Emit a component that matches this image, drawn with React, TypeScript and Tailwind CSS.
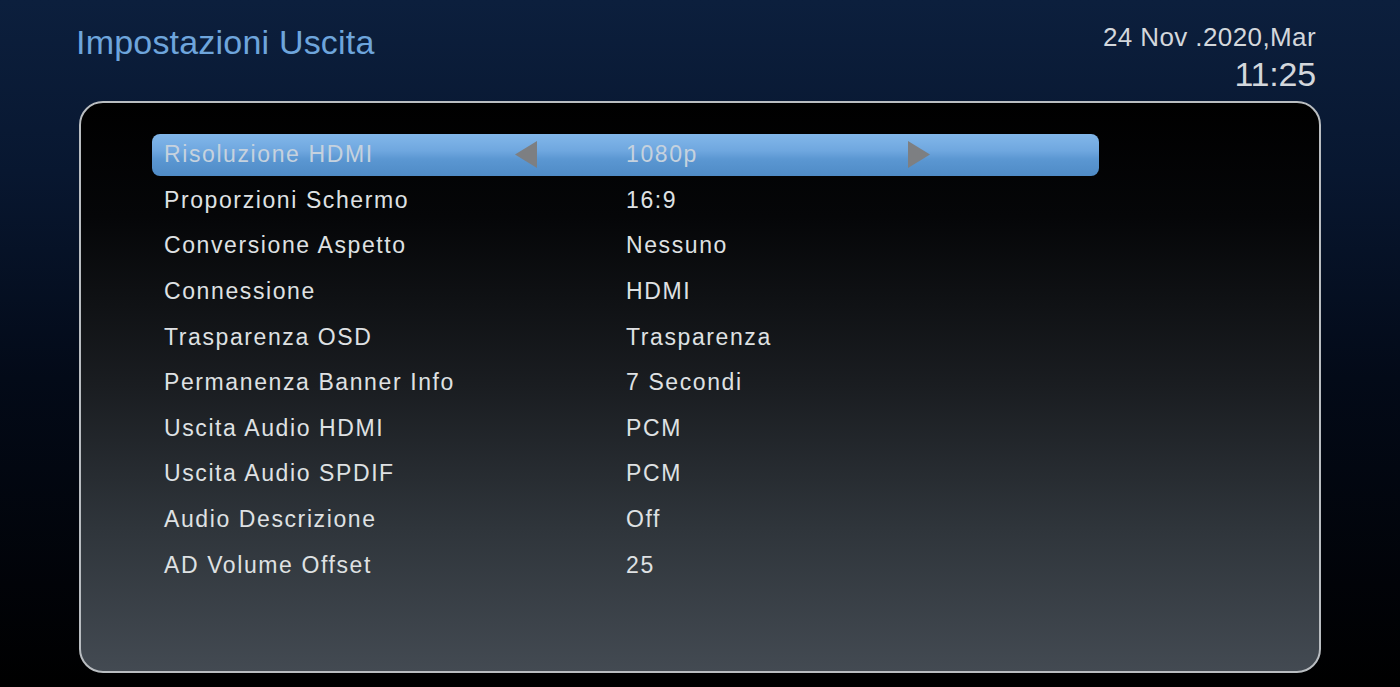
import React from "react";

const rows: { label: string; value: string }[] = [
  { label: "Risoluzione HDMI", value: "1080p" },
  { label: "Proporzioni Schermo", value: "16:9" },
  { label: "Conversione Aspetto", value: "Nessuno" },
  { label: "Connessione", value: "HDMI" },
  { label: "Trasparenza OSD", value: "Trasparenza" },
  { label: "Permanenza Banner Info", value: "7 Secondi" },
  { label: "Uscita Audio HDMI", value: "PCM" },
  { label: "Uscita Audio SPDIF", value: "PCM" },
  { label: "Audio Descrizione", value: "Off" },
  { label: "AD Volume Offset", value: "25" },
];

function Tri({ dir }: { dir: "left" | "right" }) {
  return (
    <svg width="22" height="27" viewBox="0 0 22 27" className="block">
      {dir === "left" ? (
        <polygon points="22,0 22,27 0,13.5" fill="#7d7f82" />
      ) : (
        <polygon points="0,0 0,27 22,13.5" fill="#7d7f82" />
      )}
    </svg>
  );
}

export default function App() {
  return (
    <div
      className="w-[1400px] h-[687px] overflow-hidden flex flex-col bg-[linear-gradient(to_bottom,#0c1f3d_0%,#081730_25%,#030a18_55%,#010308_85%,#000000_100%)]"
      style={{ fontFamily: '"Liberation Sans", Arial, sans-serif' }}
    >
      <div className="h-[101px] flex justify-between">
        <div className="pl-[76px] pt-[22px] text-[34px] leading-[40px] text-[#6ea5dc] tracking-[0.2px]">
          Impostazioni Uscita
        </div>
        <div className="pr-[84px] pt-[22px] flex flex-col items-end text-[#d3d7dc]">
          <div className="text-[26px] leading-[30px] tracking-[0.4px]">24 Nov .2020,Mar</div>
          <div className="text-[34px] leading-[38px] tracking-[-0.2px] mt-[3px]">11:25</div>
        </div>
      </div>
      <div className="mx-[79px] w-[1242px] h-[572px] rounded-[24px] border-2 border-[#b9bdc1] bg-[linear-gradient(to_bottom,#000000_0%,#050608_20%,#1a1d21_50%,#2f353b_75%,#434a52_100%)] pl-[71px] pt-[29px]">
        <div className="flex flex-col">
          {rows.map((r, i) => {
            const sel = i === 0;
            return (
              <div key={r.label} className="h-[45.6px] flex items-center">
                <div
                  className={
                    "w-[947px] h-[42px] flex items-center rounded-[8px] " +
                    (sel
                      ? "bg-[linear-gradient(to_bottom,#82b7ea_0%,#6fa7df_40%,#5b97d2_60%,#4f8bc6_100%)] text-[#c6d2de]"
                      : "text-[#dfe1e3]")
                  }
                >
                  <div className="w-[363px] pl-[12px] text-[23px] tracking-[1.6px] leading-none whitespace-nowrap">
                    {r.label}
                  </div>
                  <div className="w-[111px] flex">{sel && <Tri dir="left" />}</div>
                  <div className="w-[282px] text-[23px] tracking-[1.6px] leading-none whitespace-nowrap">
                    {r.value}
                  </div>
                  <div className="flex">{sel && <Tri dir="right" />}</div>
                </div>
              </div>
            );
          })}
        </div>
      </div>
    </div>
  );
}
